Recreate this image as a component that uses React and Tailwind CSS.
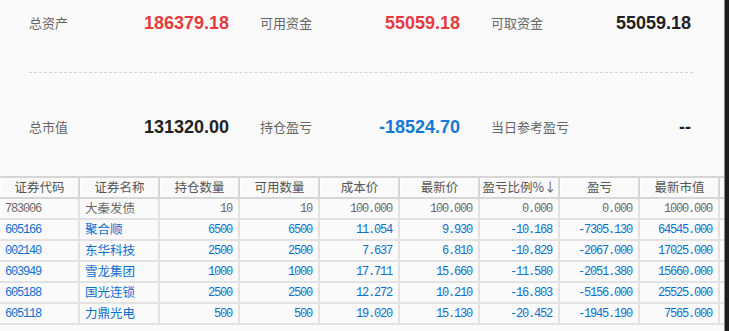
import React from 'react';

const summary = [
  [
    { label: '总资产', value: '186379.18', color: 'text-[#e63a3f]' },
    { label: '可用资金', value: '55059.18', color: 'text-[#e63a3f]' },
    { label: '可取资金', value: '55059.18', color: 'text-[#222222]' },
  ],
  [
    { label: '总市值', value: '131320.00', color: 'text-[#222222]' },
    { label: '持仓盈亏', value: '-18524.70', color: 'text-[#1479d6]' },
    { label: '当日参考盈亏', value: '--', color: 'text-[#222222]' },
  ],
];

const headers = ['证券代码', '证券名称', '持仓数量', '可用数量', '成本价', '最新价', '盈亏比例%↓', '盈亏', '最新市值'];

const rows = [
  ['783006', '大秦发债', '10', '10', '100.000', '100.000', '0.000', '0.000', '1000.000'],
  ['605166', '聚合顺', '6500', '6500', '11.054', '9.930', '-10.168', '-7305.130', '64545.000'],
  ['002140', '东华科技', '2500', '2500', '7.637', '6.810', '-10.829', '-2067.000', '17025.000'],
  ['603949', '雪龙集团', '1000', '1000', '17.711', '15.660', '-11.580', '-2051.380', '15660.000'],
  ['605188', '国光连锁', '2500', '2500', '12.272', '10.210', '-16.803', '-5156.000', '25525.000'],
  ['605118', '力鼎光电', '500', '500', '19.020', '15.130', '-20.452', '-1945.190', '7565.000'],
];

const cjk = "font-['Noto_Sans_CJK_SC',sans-serif]";
const mono = "font-['Liberation_Mono','Noto_Sans_CJK_SC',monospace]";

function SummaryRow({ items }) {
  return (
    <div className="grid grid-cols-[200px_200px_200px] gap-x-[31px]">
      {items.map((it) => (
        <div key={it.label} className="flex items-center justify-between">
          <span className={`${cjk} text-[13px] text-[#666666]`}>{it.label}</span>
          <span className={`font-['Liberation_Sans',sans-serif] font-bold text-[18px] ${it.color}`}>{it.value}</span>
        </div>
      ))}
    </div>
  );
}

export default function App() {
  return (
    <div className="flex w-[729px] h-[331px] overflow-hidden bg-[#fafafa]">
      <div className="w-[724px] h-full flex flex-col">
        <div className="h-[176px] px-[29px] flex flex-col">
          <div className="h-[46px] flex items-center">
            <SummaryRow items={summary[0]} />
          </div>
          <div className="mt-[26px] w-[664px] border-t border-dashed border-[#d4d4d4]" />
          <div className="mt-[27px] h-[54px] flex items-center">
            <SummaryRow items={summary[1]} />
          </div>
        </div>

        <div className="border-t-2 border-[#d6d6d6]">
          <div className="grid grid-cols-[repeat(9,80px)] h-[21px] border-b-2 border-[#d6d6d6]">
            {headers.map((h) => (
              <div
                key={h}
                className={`${cjk} text-[12.5px] text-[#555555] flex items-center justify-center border-r-2 border-[#d6d6d6] border-l border-l-white`}
              >
                {h}
              </div>
            ))}
          </div>
          {rows.map((r, i) => (
            <div
              key={r[0]}
              className={`grid grid-cols-[repeat(9,80px)] h-[21px] border-b-2 border-[#e2e2e2] ${i === 0 ? 'text-[#6a6a6a]' : 'text-[#0b6fd0]'}`}
            >
              {r.map((c, j) => (
                <div
                  key={j}
                  className={`flex items-center border-r-2 border-[#e2e2e2] ${
                    j === 0
                      ? `${mono} text-[12px] tracking-[-1.2px] pl-[5px]`
                      : j === 1
                      ? `${cjk} text-[12.5px] pl-[5px]`
                      : `${mono} text-[12px] tracking-[-1.2px] justify-end pr-[6px]`
                  }`}
                >
                  {c}
                </div>
              ))}
            </div>
          ))}
        </div>
      </div>
      <div className="w-[5px] h-full border-l border-[#8a8a8a] bg-[#1c1c1c]" />
    </div>
  );
}
